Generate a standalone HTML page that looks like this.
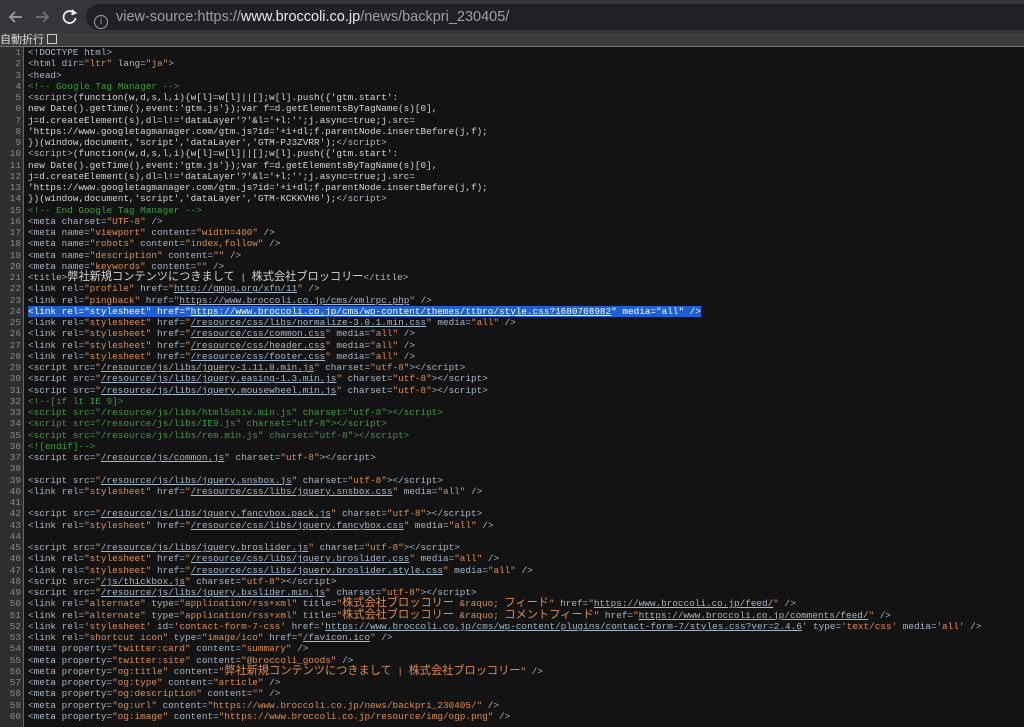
<!DOCTYPE html>
<html><head><meta charset="utf-8"><style>
body{margin:0;width:1024px;height:721px;overflow:hidden;background:#131313;font-family:"Liberation Sans",sans-serif}
#bar{position:absolute;left:0;top:0;width:1024px;height:33px;background:#35363a}
#url{position:absolute;left:86px;top:4px;width:960px;height:26px;border-radius:13px;background:#202124;color:#9aa0a6;font-size:14.5px;line-height:26px}
#url b{font-weight:normal;color:#e8eaed}
#tb{position:absolute;left:0;top:33px;width:1024px;height:13px;background:#3c3c3c;border-bottom:1px solid #777;color:#ddd;font:11px "Noto Sans CJK JP",sans-serif;line-height:13px}
#tb i{display:inline-block;width:8px;height:8px;border:1px solid #ccc;vertical-align:-1px;margin-left:3px}
#g{position:absolute;left:0;top:47px;width:23px;height:680px;background:#2e2e2e;border-right:1px solid #666}
#code{position:absolute;left:0;top:47px;font-family:"Liberation Mono","Noto Sans CJK JP",monospace;font-size:9.35px;color:#d4d4d4}
.l{height:11.25px;line-height:11.25px;position:relative;white-space:pre;overflow:visible}
.n{display:inline-block;width:21px;text-align:right;color:#8a8a8a;margin-right:7px}
.t{color:#a4b6c9}.a{color:#dc8d52}.c{color:#3e9b3e}.u{color:#a4b6c9;text-decoration:underline}
.j{font-size:11.2px;line-height:11px;letter-spacing:0}
.h{background:#1f5fd1;color:#fff}.h *{color:#fff}
</style></head><body>
<div id="bar">
<svg width="90" height="33" style="position:absolute;left:0;top:0" fill="none" stroke="#9aa0a6" stroke-width="1.8">
<path d="M10 17h12M15 12l-5 5 5 5"/><path d="M36 17h12M43 12l5 5-5 5" stroke="#6f7377"/>
<path d="M74 13a6 6 0 1 0 1.5 5" stroke="#e8eaed"/><path d="M72 10l3.5 3-4 1.5" stroke="#e8eaed" fill="#e8eaed"/>
</svg>
<div id="url"><span style="display:inline-block;width:14px;height:14px;border:1.5px solid #9aa0a6;border-radius:50%;vertical-align:-3px;margin:0 8px 0 8px;font-size:10px;text-align:center;box-sizing:border-box;line-height:11px">i</span>view-source:https://<b>www.broccoli.co.jp</b>/news/backpri_230405/</div>
</div>
<div id="tb"><span class="j" style="font-size:11px">自動折行</span><i></i></div>
<div id="g"></div>
<div id="code">
<div class="l"><span class="n">1</span><span class="t">&lt;!DOCTYPE html&gt;</span></div>
<div class="l"><span class="n">2</span><span class="t">&lt;html dir=<span class="a">"ltr"</span> lang=<span class="a">"ja"</span>&gt;</span></div>
<div class="l"><span class="n">3</span><span class="t">&lt;head&gt;</span></div>
<div class="l"><span class="n">4</span><span class="c">&lt;!-- Google Tag Manager --&gt;</span></div>
<div class="l"><span class="n">5</span><span class="t">&lt;script&gt;</span>(function(w,d,s,l,i){w[l]=w[l]||[];w[l].push({'gtm.start':</div>
<div class="l"><span class="n">6</span>new Date().getTime(),event:'gtm.js'});var f=d.getElementsByTagName(s)[0],</div>
<div class="l"><span class="n">7</span>j=d.createElement(s),dl=l!='dataLayer'?'&amp;l='+l:'';j.async=true;j.src=</div>
<div class="l"><span class="n">8</span>'https://www.googletagmanager.com/gtm.js?id='+i+dl;f.parentNode.insertBefore(j,f);</div>
<div class="l"><span class="n">9</span>})(window,document,'script','dataLayer','GTM-PJ3ZVRR');<span class="t">&lt;/script&gt;</span></div>
<div class="l"><span class="n">10</span><span class="t">&lt;script&gt;</span>(function(w,d,s,l,i){w[l]=w[l]||[];w[l].push({'gtm.start':</div>
<div class="l"><span class="n">11</span>new Date().getTime(),event:'gtm.js'});var f=d.getElementsByTagName(s)[0],</div>
<div class="l"><span class="n">12</span>j=d.createElement(s),dl=l!='dataLayer'?'&amp;l='+l:'';j.async=true;j.src=</div>
<div class="l"><span class="n">13</span>'https://www.googletagmanager.com/gtm.js?id='+i+dl;f.parentNode.insertBefore(j,f);</div>
<div class="l"><span class="n">14</span>})(window,document,'script','dataLayer','GTM-KCKKVH6');<span class="t">&lt;/script&gt;</span></div>
<div class="l"><span class="n">15</span><span class="c">&lt;!-- End Google Tag Manager --&gt;</span></div>
<div class="l"><span class="n">16</span><span class="t">&lt;meta charset=<span class="a">"UTF-8"</span> /&gt;</span></div>
<div class="l"><span class="n">17</span><span class="t">&lt;meta name=<span class="a">"viewport"</span> content=<span class="a">"width=400"</span> /&gt;</span></div>
<div class="l"><span class="n">18</span><span class="t">&lt;meta name=<span class="a">"robots"</span> content=<span class="a">"index,follow"</span> /&gt;</span></div>
<div class="l"><span class="n">19</span><span class="t">&lt;meta name=<span class="a">"description"</span> content=<span class="a">""</span> /&gt;</span></div>
<div class="l"><span class="n">20</span><span class="t">&lt;meta name=<span class="a">"keywords"</span> content=<span class="a">""</span> /&gt;</span></div>
<div class="l"><span class="n">21</span><span class="t">&lt;title&gt;</span><span class="j">弊社新規コンテンツにつきまして</span> | <span class="j">株式会社ブロッコリー</span><span class="t">&lt;/title&gt;</span></div>
<div class="l"><span class="n">22</span><span class="t">&lt;link rel=<span class="a">"profile"</span> href=<span class="a">"</span><span class="u">http://gmpg.org/xfn/11</span><span class="a">"</span> /&gt;</span></div>
<div class="l"><span class="n">23</span><span class="t">&lt;link rel=<span class="a">"pingback"</span> href=<span class="a">"</span><span class="u">https://www.broccoli.co.jp/cms/xmlrpc.php</span><span class="a">"</span> /&gt;</span></div>
<div class="l"><span class="n">24</span><span class="h">&lt;link rel="stylesheet" href="<u>https://www.broccoli.co.jp/cms/wp-content/themes/ttbro/style.css?1680708982</u>" media="all" /&gt;</span></div>
<div class="l"><span class="n">25</span><span class="t">&lt;link rel=<span class="a">"stylesheet"</span> href=<span class="a">"</span><span class="u">/resource/css/libs/normalize-3.0.1.min.css</span><span class="a">"</span> media=<span class="a">"all"</span> /&gt;</span></div>
<div class="l"><span class="n">26</span><span class="t">&lt;link rel=<span class="a">"stylesheet"</span> href=<span class="a">"</span><span class="u">/resource/css/common.css</span><span class="a">"</span> media=<span class="a">"all"</span> /&gt;</span></div>
<div class="l"><span class="n">27</span><span class="t">&lt;link rel=<span class="a">"stylesheet"</span> href=<span class="a">"</span><span class="u">/resource/css/header.css</span><span class="a">"</span> media=<span class="a">"all"</span> /&gt;</span></div>
<div class="l"><span class="n">28</span><span class="t">&lt;link rel=<span class="a">"stylesheet"</span> href=<span class="a">"</span><span class="u">/resource/css/footer.css</span><span class="a">"</span> media=<span class="a">"all"</span> /&gt;</span></div>
<div class="l"><span class="n">29</span><span class="t">&lt;script src=<span class="a">"</span><span class="u">/resource/js/libs/jquery-1.11.0.min.js</span><span class="a">"</span> charset=<span class="a">"utf-8"</span>&gt;&lt;/script&gt;</span></div>
<div class="l"><span class="n">30</span><span class="t">&lt;script src=<span class="a">"</span><span class="u">/resource/js/libs/jquery.easing-1.3.min.js</span><span class="a">"</span> charset=<span class="a">"utf-8"</span>&gt;&lt;/script&gt;</span></div>
<div class="l"><span class="n">31</span><span class="t">&lt;script src=<span class="a">"</span><span class="u">/resource/js/libs/jquery.mousewheel.min.js</span><span class="a">"</span> charset=<span class="a">"utf-8"</span>&gt;&lt;/script&gt;</span></div>
<div class="l"><span class="n">32</span><span class="c">&lt;!--[if lt IE 9]&gt;</span></div>
<div class="l"><span class="n">33</span><span class="c">&lt;script src="/resource/js/libs/html5shiv.min.js" charset="utf-8"&gt;&lt;/script&gt;</span></div>
<div class="l"><span class="n">34</span><span class="c">&lt;script src="/resource/js/libs/IE9.js" charset="utf-8"&gt;&lt;/script&gt;</span></div>
<div class="l"><span class="n">35</span><span class="c">&lt;script src="/resource/js/libs/rem.min.js" charset="utf-8"&gt;&lt;/script&gt;</span></div>
<div class="l"><span class="n">36</span><span class="c">&lt;![endif]--&gt;</span></div>
<div class="l"><span class="n">37</span><span class="t">&lt;script src=<span class="a">"</span><span class="u">/resource/js/common.js</span><span class="a">"</span> charset=<span class="a">"utf-8"</span>&gt;&lt;/script&gt;</span></div>
<div class="l"><span class="n">38</span></div>
<div class="l"><span class="n">39</span><span class="t">&lt;script src=<span class="a">"</span><span class="u">/resource/js/libs/jquery.snsbox.js</span><span class="a">"</span> charset=<span class="a">"utf-8"</span>&gt;&lt;/script&gt;</span></div>
<div class="l"><span class="n">40</span><span class="t">&lt;link rel=<span class="a">"stylesheet"</span> href=<span class="a">"</span><span class="u">/resource/css/libs/jquery.snsbox.css</span><span class="a">"</span> media=<span class="a">"all"</span> /&gt;</span></div>
<div class="l"><span class="n">41</span></div>
<div class="l"><span class="n">42</span><span class="t">&lt;script src=<span class="a">"</span><span class="u">/resource/js/libs/jquery.fancybox.pack.js</span><span class="a">"</span> charset=<span class="a">"utf-8"</span>&gt;&lt;/script&gt;</span></div>
<div class="l"><span class="n">43</span><span class="t">&lt;link rel=<span class="a">"stylesheet"</span> href=<span class="a">"</span><span class="u">/resource/css/libs/jquery.fancybox.css</span><span class="a">"</span> media=<span class="a">"all"</span> /&gt;</span></div>
<div class="l"><span class="n">44</span></div>
<div class="l"><span class="n">45</span><span class="t">&lt;script src=<span class="a">"</span><span class="u">/resource/js/libs/jquery.broslider.js</span><span class="a">"</span> charset=<span class="a">"utf-8"</span>&gt;&lt;/script&gt;</span></div>
<div class="l"><span class="n">46</span><span class="t">&lt;link rel=<span class="a">"stylesheet"</span> href=<span class="a">"</span><span class="u">/resource/css/libs/jquery.broslider.css</span><span class="a">"</span> media=<span class="a">"all"</span> /&gt;</span></div>
<div class="l"><span class="n">47</span><span class="t">&lt;link rel=<span class="a">"stylesheet"</span> href=<span class="a">"</span><span class="u">/resource/css/libs/jquery.broslider.style.css</span><span class="a">"</span> media=<span class="a">"all"</span> /&gt;</span></div>
<div class="l"><span class="n">48</span><span class="t">&lt;script src=<span class="a">"</span><span class="u">/js/thickbox.js</span><span class="a">"</span> charset=<span class="a">"utf-8"</span>&gt;&lt;/script&gt;</span></div>
<div class="l"><span class="n">49</span><span class="t">&lt;script src=<span class="a">"</span><span class="u">/resource/js/libs/jquery.bxslider.min.js</span><span class="a">"</span> charset=<span class="a">"utf-8"</span>&gt;&lt;/script&gt;</span></div>
<div class="l"><span class="n">50</span><span class="t">&lt;link rel=<span class="a">"alternate"</span> type=<span class="a">"application/rss+xml"</span> title=<span class="a">"<span class="j">株式会社ブロッコリー</span> &amp;raquo; <span class="j">フィード</span>"</span> href=<span class="a">"</span><span class="u">https://www.broccoli.co.jp/feed/</span><span class="a">"</span> /&gt;</span></div>
<div class="l"><span class="n">51</span><span class="t">&lt;link rel=<span class="a">"alternate"</span> type=<span class="a">"application/rss+xml"</span> title=<span class="a">"<span class="j">株式会社ブロッコリー</span> &amp;raquo; <span class="j">コメントフィード</span>"</span> href=<span class="a">"</span><span class="u">https://www.broccoli.co.jp/comments/feed/</span><span class="a">"</span> /&gt;</span></div>
<div class="l"><span class="n">52</span><span class="t">&lt;link rel=<span class="a">'stylesheet'</span> id=<span class="a">'contact-form-7-css'</span> href=<span class="a">'</span><span class="u">https://www.broccoli.co.jp/cms/wp-content/plugins/contact-form-7/styles.css?ver=2.4.6</span><span class="a">'</span> type=<span class="a">'text/css'</span> media=<span class="a">'all'</span> /&gt;</span></div>
<div class="l"><span class="n">53</span><span class="t">&lt;link rel=<span class="a">"shortcut icon"</span> type=<span class="a">"image/ico"</span> href=<span class="a">"</span><span class="u">/favicon.ico</span><span class="a">"</span> /&gt;</span></div>
<div class="l"><span class="n">54</span><span class="t">&lt;meta property=<span class="a">"twitter:card"</span> content=<span class="a">"summary"</span> /&gt;</span></div>
<div class="l"><span class="n">55</span><span class="t">&lt;meta property=<span class="a">"twitter:site"</span> content=<span class="a">"@broccoli_goods"</span> /&gt;</span></div>
<div class="l"><span class="n">56</span><span class="t">&lt;meta property=<span class="a">"og:title"</span> content=<span class="a">"<span class="j">弊社新規コンテンツにつきまして</span> | <span class="j">株式会社ブロッコリー</span>"</span> /&gt;</span></div>
<div class="l"><span class="n">57</span><span class="t">&lt;meta property=<span class="a">"og:type"</span> content=<span class="a">"article"</span> /&gt;</span></div>
<div class="l"><span class="n">58</span><span class="t">&lt;meta property=<span class="a">"og:description"</span> content=<span class="a">""</span> /&gt;</span></div>
<div class="l"><span class="n">59</span><span class="t">&lt;meta property=<span class="a">"og:url"</span> content=<span class="a">"https://www.broccoli.co.jp/news/backpri_230405/"</span> /&gt;</span></div>
<div class="l"><span class="n">60</span><span class="t">&lt;meta property=<span class="a">"og:image"</span> content=<span class="a">"https://www.broccoli.co.jp/resource/img/ogp.png"</span> /&gt;</span></div>
</div>
</body></html>
